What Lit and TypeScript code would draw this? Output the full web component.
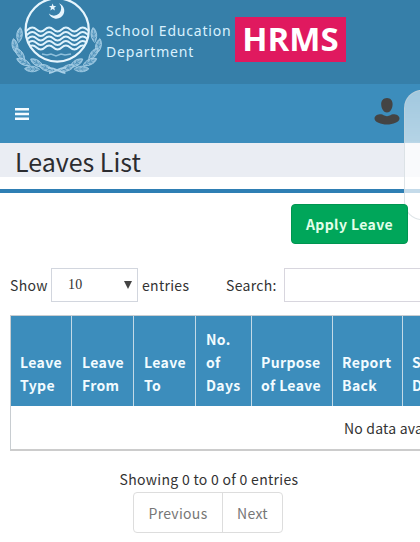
import { LitElement, html, css, svg } from 'lit';
import { customElement, property, state } from 'lit/decorators.js';

const WAVES = [0, 1, 2, 3, 4];

const LEAVES = [
  { x: 19.5, y: 35, angle: 6 },
  { x: 15, y: 46, angle: -12 },
  { x: 20, y: 54, angle: -38 },
  { x: 23.5, y: 62, angle: -64 },
  { x: 32, y: 69, angle: -88 },
  { x: 37, y: 63, angle: -58 },
  { x: 46, y: 68, angle: -68 },
];

@customElement('school-emblem')
export class SchoolEmblem extends LitElement {
  static styles = css`
    :host {
      display: block;
      width: 94px;
      height: 84px;
    }
    svg {
      display: block;
    }
  `;

  leaf({ x, y, angle }: { x: number; y: number; angle: number }) {
    return svg`
      <g transform="translate(${x} ${y}) rotate(${angle})">
        <path d="M0 -7.5C3.6 -4 3.8 3 0 7.5C-3.8 3 -3.6 -4 0 -7.5Z" fill="#8dbdd9" />
        <path d="M0 -5V7M-2 -2L0 0L2 -2M-2 2L0 4L2 2" stroke="#4f91b9" stroke-width=".8" />
      </g>
    `;
  }

  wave(i: number) {
    return svg`
      <path
        d="M24 ${31.5 + i * 4.5}c4 0 4-4 8.3-4s4.3 4 8.5 4s4-4 8.3-4s4.3 4 8.5 4s4-4 8.3-4s4.3 4 8.5 4s4-4 8.3-4s4.3 4 8.5 4"
      />
    `;
  }

  render() {
    return html`
      <svg width="94" height="84" viewBox="10 0 94 84" fill="none" stroke="#a9d0e7">
        <defs>
          <clipPath id="disc"><circle cx="57.2" cy="30" r="31.5" /></clipPath>
        </defs>
        <g stroke-width=".8">
          ${LEAVES.map((l) => this.leaf(l))}
          <g transform="translate(113.4 0) scale(-1 1)">
            ${LEAVES.map((l) => this.leaf(l))}
          </g>
          <path d="M49 73C54 73 59 67 66 68M65.4 73C60 73 55 67 48 68" stroke-width="1.8" />
        </g>
        <circle cx="57.2" cy="30" r="31.6" fill="#367fa9" stroke="#e6f5fd" stroke-width="2.2" />
        <g clip-path="url(#disc)" stroke="#dff3fd" stroke-width="1.9">
          ${WAVES.map((i) => this.wave(i))}
          <path d="M42 54l5 1l4-1l5 2l5-2l4 1l6-1" stroke="#8fc0dc" stroke-width="1.5" />
        </g>
        <g fill="#e6f5fd" stroke="none">
          <path d="M59 3.2A8 8 0 1 1 48.8 13.6A6.7 6.7 0 1 0 59 3.2Z" />
          <path d="M52.6 3.6l1 2.4l2.6.1l-2 1.7l.7 2.6l-2.3-1.4l-2.2 1.4l.6-2.6l-2-1.7l2.6-.1z" />
        </g>
      </svg>
    `;
  }
}

@customElement('leaves-table')
export class LeavesTable extends LitElement {
  static styles = css`
    :host {
      display: block;
    }
    table {
      width: 620px;
      table-layout: fixed;
      border-collapse: separate;
      border-spacing: 0;
      border: 1px solid #c8cdd1;
      border-bottom: 2px solid #ccc;
      box-sizing: border-box;
    }
    th {
      box-sizing: border-box;
      height: 90px;
      padding: 0 0 9px 9px;
      vertical-align: bottom;
      text-align: left;
      font-size: 14px;
      line-height: 23px;
      letter-spacing: 0.35px;
      color: #f2fbff;
      background: #3c8dbc;
      border-right: 1px solid #c3dae7;
      white-space: pre-line;
    }
    th + th {
      padding-left: 10px;
    }
    th:nth-child(n + 5) {
      padding-left: 9px;
    }
    td {
      box-sizing: border-box;
      height: 43px;
      padding: 0 0 0 333px;
      font-size: 14px;
      letter-spacing: 0.2px;
      color: #333;
    }
  `;

  @property({ type: Array }) columns: { title: string; width: number }[] = [];

  render() {
    return html`
      <table>
        <colgroup>
          ${this.columns.map((c) => html`<col style="width: ${c.width}px" />`)}
        </colgroup>
        <thead>
          <tr>
            ${this.columns.map((c) => html`<th>${c.title}</th>`)}
          </tr>
        </thead>
        <tbody>
          <tr>
            <td colspan=${this.columns.length}>No data available in table</td>
          </tr>
        </tbody>
      </table>
    `;
  }
}

@customElement('app-root')
export class AppRoot extends LitElement {
  static styles = css`
    :host {
      display: block;
      position: relative;
      width: 420px;
      height: 542px;
      overflow: hidden;
      background: #fff;
      color: #333;
      font-family: 'Noto Sans CJK SC', 'Open Sans', sans-serif;
      font-size: 14px;
    }
    * {
      box-sizing: border-box;
    }
    .brand {
      display: flex;
      height: 84px;
      padding-left: 10px;
      background: #367fa9;
    }
    .brand-name {
      width: 131px;
      padding: 20px 0 0 2px;
      font-family: 'Noto Sans', sans-serif;
      font-size: 14px;
      line-height: 21px;
      letter-spacing: 0.8px;
      color: #d9f1fe;
      white-space: nowrap;
    }
    .hrms {
      width: 111px;
      height: 45px;
      margin-top: 17px;
      background: #e0195f;
      color: #fff;
      font-family: 'Open Sans', sans-serif;
      font-size: 33px;
      font-weight: 700;
      line-height: 43px;
      text-align: center;
    }
    .navbar {
      display: flex;
      justify-content: space-between;
      height: 59px;
      padding: 0 20px 0 15px;
      background: #3c8dbc;
    }
    .navbar svg {
      display: block;
    }
    .toggle {
      margin-top: 24px;
    }
    .user {
      margin-top: 13px;
    }
    h1 {
      height: 34px;
      margin: 0;
      padding-left: 15px;
      background: #eaedf3;
      font-size: 25px;
      font-weight: 400;
      line-height: 37px;
      color: #2c2c30;
    }
    .box {
      margin-top: 12px;
      border-top: 4px solid #2f7fb4;
    }
    .actions {
      display: flex;
      justify-content: flex-end;
      padding: 11px 12px 0 0;
    }
    button {
      font-family: inherit;
      cursor: pointer;
    }
    .apply {
      position: relative;
      z-index: 1;
      width: 117px;
      height: 40px;
      padding: 0 0 1px;
      border: 1px solid #009551;
      border-radius: 4px;
      background: #00a65a;
      color: #e2ffe9;
      font-size: 14px;
      font-weight: 700;
      letter-spacing: 0.4px;
    }
    .controls {
      display: flex;
      align-items: center;
      height: 34px;
      margin-top: 24px;
      padding-left: 10px;
      white-space: nowrap;
      letter-spacing: 0.3px;
    }
    .controls > * {
      flex: none;
    }
    .show {
      width: 41px;
    }
    .length {
      display: flex;
      align-items: center;
      justify-content: space-between;
      width: 87px;
      height: 34px;
      padding: 0 5px 0 16px;
      border: 1px solid #d2d6de;
      font-family: 'Liberation Serif', serif;
      font-size: 14px;
    }
    .entries {
      width: 88px;
      padding-left: 4px;
    }
    .search {
      width: 58px;
    }
    input {
      width: 160px;
      height: 34px;
      border: 1px solid #d8d6de;
      background: #fff;
    }
    leaves-table {
      margin: 13px 0 0 10px;
    }
    .info {
      margin-top: 16px;
      padding-right: 2px;
      line-height: 24px;
      letter-spacing: 0.3px;
      text-align: center;
    }
    .pager {
      display: flex;
      width: 150px;
      height: 41px;
      margin: 1px 0 0 133px;
      border: 1px solid #ddd;
      border-radius: 4px;
    }
    .pager button {
      flex: 1;
      padding: 0;
      border: 0;
      background: none;
      color: #777;
      font-size: 14px;
      letter-spacing: 0.3px;
    }
    .pager .prev {
      flex: none;
      width: 89px;
      border-right: 1px solid #ddd;
    }
    .edge-panel {
      position: absolute;
      top: 90px;
      left: 404px;
      width: 40px;
      height: 130px;
      border: 1px solid rgba(200, 210, 215, 0.6);
      border-radius: 18px;
      background: linear-gradient(
        rgba(255, 255, 255, 0.52),
        rgba(255, 255, 255, 0.62) 50px,
        rgba(255, 255, 255, 0.72) 55px
      );
    }
  `;

  @state() private columns = [
    { title: 'Leave\nType', width: 61 },
    { title: 'Leave\nFrom', width: 62 },
    { title: 'Leave\nTo', width: 62 },
    { title: 'No.\nof\nDays', width: 56 },
    { title: 'Purpose\nof Leave', width: 81 },
    { title: 'Report\nBack', width: 70 },
    { title: 'Status\nDate', width: 226 },
  ];

  render() {
    return html`
      <header class="brand">
        <school-emblem></school-emblem>
        <div class="brand-name">School Education<br />Department</div>
        <div class="hrms">HRMS</div>
      </header>
      <nav class="navbar">
        <svg class="toggle" width="14" height="13" viewBox="0 0 14 13" fill="#f4fbff">
          <path d="M0 0h14v2.6H0zM0 4.7h14v2.6H0zM0 9.4h14v2.6H0z" />
        </svg>
        <svg class="user" width="27" height="29" viewBox="0 0 27 29" fill="#444">
          <path d="M14 1C17.7 1 19.8 3.9 19.6 7.5C19.4 12 17 15.5 14 15.5S8.4 12 8.2 7.5C8 3.9 10.3 1 14 1Z" />
          <path d="M8 17.3C10 17.3 11 19.2 14 19.2S18 17.3 20 17.3C23.5 17.3 26.5 18.8 26.5 21.5C26.5 25 20 27.5 14 27.5S1.500 25 1.5 21.5C1.5 18.8 4.5 17.3 8 17.3Z" />
        </svg>
      </nav>
      <h1>Leaves List</h1>
      <section class="box">
        <div class="actions"><button class="apply">Apply Leave</button></div>
        <div class="controls">
          <span class="show">Show</span>
          <span class="length">
            10
            <svg width="8" height="8" viewBox="0 0 8 8"><path d="M0 0h8L4 8z" fill="#444" /></svg>
          </span>
          <span class="entries">entries</span>
          <span class="search">Search:</span>
          <input type="text" />
        </div>
        <leaves-table .columns=${this.columns}></leaves-table>
        <div class="info">Showing 0 to 0 of 0 entries</div>
        <div class="pager">
          <button class="prev">Previous</button>
          <button>Next</button>
        </div>
      </section>
      <div class="edge-panel"></div>
    `;
  }
}
